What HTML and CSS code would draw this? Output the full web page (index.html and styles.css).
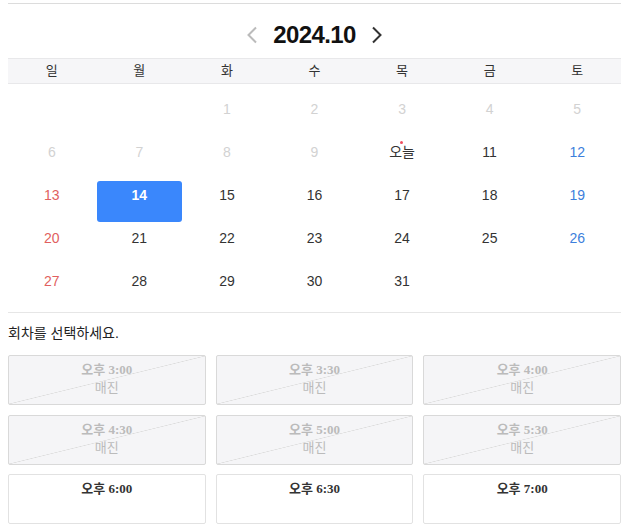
FILE: index.html
```html
<!DOCTYPE html>
<html lang="ko">
<head>
    <meta charset="UTF-8">
    <meta name="viewport" content="width=device-width, initial-scale=1.0">
    <title>회차 선택</title>
    <link rel="stylesheet" href="styles.css">
</head>
<body>
<div class="booking">
    <div class="calendar">
        <div class="cal-head">
            <button class="nav-btn prev" aria-label="이전 달">
                <svg width="12" height="18" viewBox="0 0 12 18"><path d="M10 1.5 L2.5 9 L10 16.5" fill="none" stroke="currentColor" stroke-width="2"/></svg>
            </button>
            <h2 class="cal-title">2024.10</h2>
            <button class="nav-btn next" aria-label="다음 달">
                <svg width="12" height="18" viewBox="0 0 12 18"><path d="M2 1.5 L9.5 9 L2 16.5" fill="none" stroke="currentColor" stroke-width="2"/></svg>
            </button>
        </div>
        <div class="weekdays">
            <div>일</div><div>월</div><div>화</div><div>수</div><div>목</div><div>금</div><div>토</div>
        </div>
        <div class="days">
            <div class="day empty"></div>
            <div class="day empty"></div>
            <div class="day past">1</div>
            <div class="day past">2</div>
            <div class="day past">3</div>
            <div class="day past">4</div>
            <div class="day past">5</div>

            <div class="day past">6</div>
            <div class="day past">7</div>
            <div class="day past">8</div>
            <div class="day past">9</div>
            <div class="day today">오늘</div>
            <div class="day">11</div>
            <div class="day sat">12</div>

            <div class="day sun">13</div>
            <div class="day selected">14</div>
            <div class="day">15</div>
            <div class="day">16</div>
            <div class="day">17</div>
            <div class="day">18</div>
            <div class="day sat">19</div>

            <div class="day sun">20</div>
            <div class="day">21</div>
            <div class="day">22</div>
            <div class="day">23</div>
            <div class="day">24</div>
            <div class="day">25</div>
            <div class="day sat">26</div>

            <div class="day sun">27</div>
            <div class="day">28</div>
            <div class="day">29</div>
            <div class="day">30</div>
            <div class="day">31</div>
            <div class="day empty"></div>
            <div class="day empty"></div>
        </div>
    </div>

    <p class="slot-title">회차를 선택하세요.</p>

    <div class="slots">
        <button class="slot soldout"><span class="slot-time">오후 3:00</span><span class="slot-state">매진</span></button>
        <button class="slot soldout"><span class="slot-time">오후 3:30</span><span class="slot-state">매진</span></button>
        <button class="slot soldout"><span class="slot-time">오후 4:00</span><span class="slot-state">매진</span></button>
        <button class="slot soldout"><span class="slot-time">오후 4:30</span><span class="slot-state">매진</span></button>
        <button class="slot soldout"><span class="slot-time">오후 5:00</span><span class="slot-state">매진</span></button>
        <button class="slot soldout"><span class="slot-time">오후 5:30</span><span class="slot-state">매진</span></button>
        <button class="slot"><span class="slot-time">오후 6:00</span></button>
        <button class="slot"><span class="slot-time">오후 6:30</span></button>
        <button class="slot"><span class="slot-time">오후 7:00</span></button>
    </div>
</div>
</body>
</html>
```

FILE: styles.css
```css
body {
    margin: 0;
    font-family: "Liberation Sans", "Noto Sans CJK KR", sans-serif;
    color: #333;
    background-color: #fff;
}

.booking {
    padding: 3px 8px 0;
}

.calendar {
    border-top: 1px solid #dcdcdc;
    border-bottom: 1px solid #e6e6e6;
    padding-bottom: 3px;
}

.cal-head {
    display: flex;
    justify-content: center;
    align-items: center;
    gap: 15px;
    height: 54px;
    padding-top: 8px;
    box-sizing: border-box;
}

.cal-title {
    margin: 0;
    font-size: 24px;
    font-weight: bold;
    letter-spacing: -0.6px;
    color: #111;
}

.nav-btn {
    display: flex;
    align-items: center;
    padding: 0;
    border: none;
    background: none;
    cursor: pointer;
}

.nav-btn.prev {
    color: #bbb;
}

.nav-btn.next {
    color: #333;
}

.weekdays {
    display: grid;
    grid-template-columns: repeat(7, 1fr);
    height: 26px;
    box-sizing: border-box;
    border-top: 1px solid #e8e8ea;
    border-bottom: 1px solid #e8e8ea;
    background-color: #f6f6f8;
    font-size: 13px;
    line-height: 24px;
    text-align: center;
    color: #333;
}

.days {
    display: grid;
    grid-template-columns: repeat(7, 1fr);
    padding-top: 10px;
}

.day {
    position: relative;
    height: 41px;
    margin: 1px;
    padding-top: 6px;
    box-sizing: border-box;
    border-radius: 3px;
    font-size: 14px;
    line-height: 16px;
    text-align: center;
    color: #333;
}

.day.past {
    color: #d2d2d2;
}

.day.sun {
    color: #e15f5f;
}

.day.sat {
    color: #3d7fdc;
}

.day.today::before {
    content: "";
    position: absolute;
    top: 3px;
    left: 50%;
    width: 3px;
    height: 3px;
    margin-left: -2px;
    border-radius: 50%;
    background-color: #ef4f5f;
}

.day.selected {
    background-color: #3a87fc;
    color: #fff;
    font-weight: bold;
}

.slot-title {
    margin: 12px 0 13px;
    font-size: 14px;
    line-height: 17px;
    color: #222;
}

.slots {
    display: grid;
    grid-template-columns: repeat(3, 1fr);
    column-gap: 10px;
    row-gap: 9.5px;
}

.slot {
    display: flex;
    flex-direction: column;
    align-items: center;
    height: 50px;
    padding: 5px 0 0;
    box-sizing: border-box;
    border: 1px solid #e2e2e2;
    border-radius: 2px;
    background-color: #fff;
    font-family: "Liberation Serif", "Noto Sans CJK KR", serif;
    font-size: 13px;
    line-height: 17px;
    color: #333;
    cursor: pointer;
}

.slot-time {
    font-weight: bold;
}

.slot-state {
    font-family: "Noto Sans CJK KR", sans-serif;
}

.slot.soldout {
    border-color: #d9d9d9;
    background: linear-gradient(to bottom right, transparent calc(50% - 0.6px), #dcdcdc 50%, transparent calc(50% + 0.6px)), #f5f5f7;
    color: #bbb;
    cursor: default;
}
```
